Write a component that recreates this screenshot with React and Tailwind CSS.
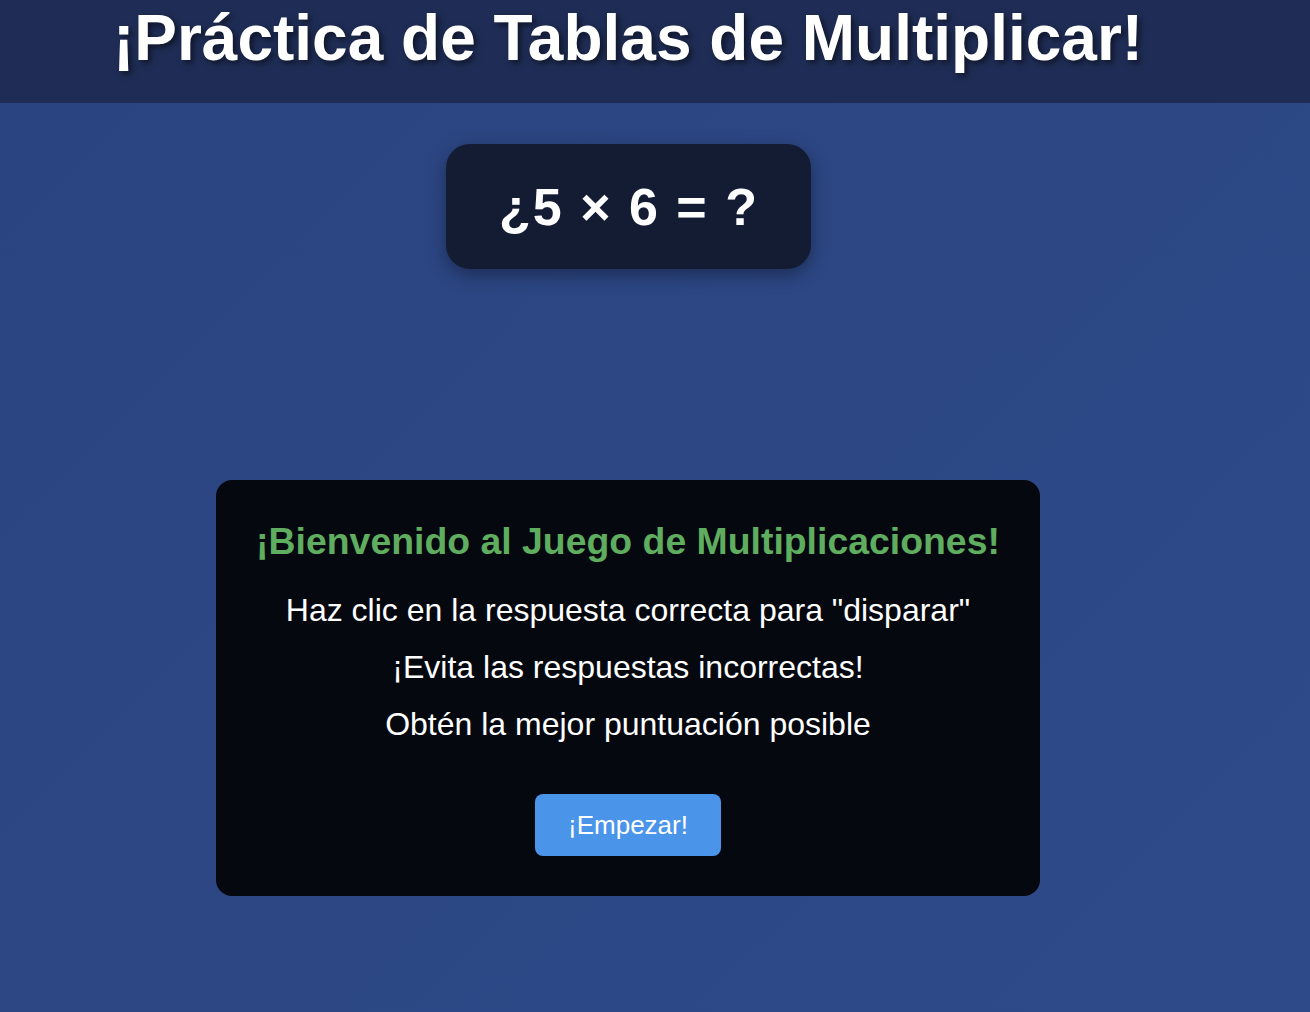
export default function App() {
  return (
    <div className="min-h-screen w-full bg-[linear-gradient(135deg,#2a4480_0%,#2f4a89_100%)] font-['Liberation_Sans',Arial,sans-serif] text-white">
      <header className="h-[103px] w-full bg-[#1f2d56]">
        <div className="w-[1256px] pt-[2px] text-center">
          <h1 className="text-[64px] leading-[72px] font-bold [text-shadow:3px_3px_6px_rgba(0,0,0,0.55)]">
            ¡Práctica de Tablas de Multiplicar!
          </h1>
        </div>
      </header>

      <main className="w-[1256px] flex flex-col items-center">
        <div className="mt-[41px] w-[365px] h-[125px] rounded-[24px] bg-[#131c33] shadow-[0_6px_18px_rgba(0,0,0,0.35)] flex items-center justify-center">
          <span className="text-[52px] leading-none font-bold tracking-[2px] pl-[2px]">¿5 × 6 = ?</span>
        </div>

        <div className="mt-[211px] w-[824px] h-[416px] rounded-[16px] bg-[#05080f] flex flex-col items-center pt-[40px]">
          <h2 className="text-[37.4px] leading-[43px] font-bold text-[#5fad5f]">
            ¡Bienvenido al Juego de Multiplicaciones!
          </h2>
          <div className="mt-[29px] flex flex-col items-center gap-[20px] text-[32px] leading-[37px]">
            <p>Haz clic en la respuesta correcta para "disparar"</p>
            <p>¡Evita las respuestas incorrectas!</p>
            <p>Obtén la mejor puntuación posible</p>
          </div>
          <button className="mt-[51px] w-[186px] h-[62px] rounded-[8px] bg-[#4a95ea] text-[26px] text-white">
            ¡Empezar!
          </button>
        </div>
      </main>
    </div>
  );
}
